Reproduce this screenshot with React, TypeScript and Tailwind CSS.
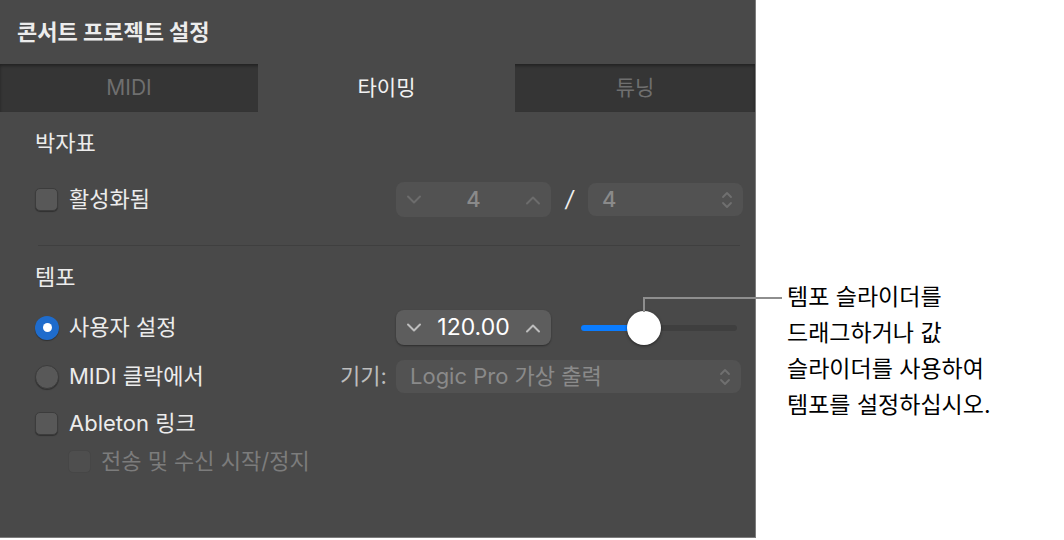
import React from 'react';

const font = { fontFamily: 'Inter, "Noto Sans CJK KR", sans-serif' };

const Chevron: React.FC<{ dir: 'up' | 'down'; color: string }> = ({ dir, color }) => (
  <svg width="16" height="10" viewBox="0 0 16 10" fill="none">
    <path
      d={dir === 'up' ? 'M2 8.5 L8 2.5 L14 8.5' : 'M2 1.5 L8 7.5 L14 1.5'}
      stroke={color}
      strokeWidth="2"
      strokeLinecap="round"
      strokeLinejoin="round"
    />
  </svg>
);

const UpDown: React.FC<{ color: string }> = ({ color }) => (
  <svg width="12" height="20" viewBox="0 0 12 20" fill="none">
    <path d="M2 7 L6 3 L10 7 M2 13 L6 17 L10 13" stroke={color} strokeWidth="1.8" strokeLinecap="round" strokeLinejoin="round" />
  </svg>
);

const Checkbox: React.FC<{ disabled?: boolean }> = ({ disabled }) => (
  <div
    className={`shrink-0 w-[23px] h-[23px] rounded-[5px] border ${
      disabled ? 'bg-[#4e4e4e] border-[#464646]' : 'bg-[#585858] border-[#3c3c3c] shadow-[0_1px_1px_rgba(0,0,0,0.35)]'
    }`}
  />
);

const Radio: React.FC<{ checked?: boolean }> = ({ checked }) =>
  checked ? (
    <div className="shrink-0 w-[24px] h-[24px] rounded-full bg-[#1f6ccc] flex items-center justify-center shadow-[0_1px_1px_rgba(0,0,0,0.35)]">
      <div className="w-[9px] h-[9px] rounded-full bg-white" />
    </div>
  ) : (
    <div className="shrink-0 w-[24px] h-[24px] rounded-full bg-[#585858] border border-[#3c3c3c] shadow-[0_1px_1px_rgba(0,0,0,0.35)]" />
  );

export default function App() {
  return (
    <div className="w-[1064px] h-[540px] bg-white flex" style={font}>
      <div className="w-[756px] h-[538px] bg-[#494949] border-r border-b border-[#7c7c7c] flex flex-col">
        <div className="h-[64px] flex items-center pl-[17px] text-[22px] font-bold text-[#ececec]">
          콘서트 프로젝트 설정
        </div>

        <div className="h-[48px] flex bg-[#353535] shadow-[inset_0_2px_3px_rgba(0,0,0,0.35)] text-[21px]">
          <div className="w-[258px] flex items-center justify-center text-[#6f6f6f]">MIDI</div>
          <div className="w-[257px] flex items-center justify-center bg-[#494949] text-[#f2f2f2]">타이밍</div>
          <div className="flex-1 flex items-center justify-center text-[#6f6f6f]">튜닝</div>
        </div>

        <div className="flex flex-col pl-[35px] pr-[12px] text-[22px] text-[#ececec]">
          <div className="mt-[19px] h-[24px] leading-[24px]">박자표</div>

          <div className="mt-[27px] h-[35px] flex items-center">
            <div className="w-[361px] flex items-center gap-[11px]">
              <Checkbox />
              <span>활성화됨</span>
            </div>
            <div className="w-[155px] h-[35px] rounded-[8px] bg-[#525252] flex items-center justify-between px-[10px]">
              <Chevron dir="down" color="#6c6c6c" />
              <span className="text-[#8a8a8a] font-medium">4</span>
              <Chevron dir="up" color="#6c6c6c" />
            </div>
            <div className="w-[37px] flex justify-center text-[#f0f0f0] italic">/</div>
            <div className="w-[155px] h-[33px] rounded-[8px] bg-[#525252] flex items-center justify-between pl-[14px] pr-[10px]">
              <span className="text-[#8a8a8a] font-medium">4</span>
              <UpDown color="#707070" />
            </div>
          </div>

          <div className="mt-[28px] ml-[3px] mr-[3px] h-px bg-[#3f3f3f]" />

          <div className="mt-[19px] h-[24px] leading-[24px]">템포</div>

          <div className="mt-[21px] h-[35px] flex items-center">
            <div className="w-[361px] flex items-center gap-[10px]">
              <Radio checked />
              <span>사용자 설정</span>
            </div>
            <div className="w-[155px] h-[35px] rounded-[8px] bg-[#5d5d5d] shadow-[0_1px_2px_rgba(0,0,0,0.4)] flex items-center justify-between px-[10px]">
              <Chevron dir="down" color="#bdbdbd" />
              <span className="text-[23px] text-white">120.00</span>
              <Chevron dir="up" color="#bdbdbd" />
            </div>
            <div className="relative ml-[30px] w-[156px] h-[35px] flex items-center">
              <div className="w-full h-[6px] rounded-full bg-[#3f3f3f] flex">
                <div className="w-[64px] h-[6px] rounded-full bg-[#0a7cff]" />
              </div>
              <div className="absolute left-[46px] top-[1px] w-[34px] h-[34px] rounded-full bg-white shadow-[0_1px_3px_rgba(0,0,0,0.5)]" />
              <div className="absolute left-[62px] top-[-13px] w-[2px] h-[15px] bg-[#8e8e8e]" />
              <div className="absolute left-[62px] top-[-13px] w-[139px] h-[2px] bg-[#8e8e8e]" />
            </div>
          </div>

          <div className="mt-[15px] h-[33px] flex items-center">
            <div className="w-[305px] flex items-center gap-[10px]">
              <Radio />
              <span>MIDI 클락에서</span>
            </div>
            <div className="w-[56px] text-[#bdbdbd]">기기:</div>
            <div className="w-[345px] h-[33px] rounded-[8px] bg-[#525252] flex items-center justify-between pl-[14px] pr-[10px]">
              <span className="text-[#8a8a8a]">Logic Pro 가상 출력</span>
              <UpDown color="#707070" />
            </div>
          </div>

          <div className="mt-[18px] h-[24px] flex items-center gap-[11px]">
            <Checkbox />
            <span>Ableton 링크</span>
          </div>

          <div className="mt-[14px] ml-[33px] h-[24px] flex items-center gap-[10px] text-[#7c7c7c]">
            <Checkbox disabled />
            <span>전송 및 수신 시작/정지</span>
          </div>
        </div>
      </div>

      <div className="pl-[31px] pt-[279px] text-[23px] leading-[36px] text-black">
        <div>템포 슬라이더를</div>
        <div>드래그하거나 값</div>
        <div>슬라이더를 사용하여</div>
        <div>템포를 설정하십시오.</div>
      </div>
    </div>
  );
}
